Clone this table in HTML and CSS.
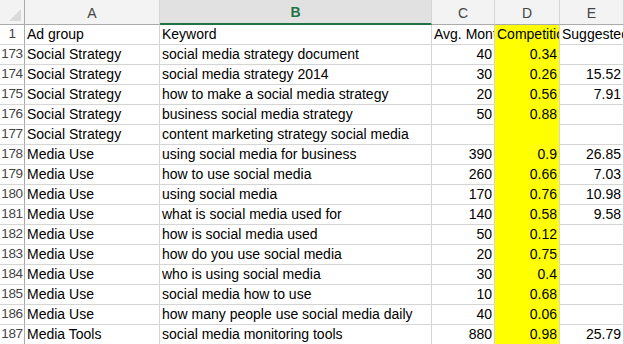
FILE: index.html
```html
<!DOCTYPE html>
<html>
<head>
<meta charset="utf-8">
<link rel="stylesheet" href="styles.css">
</head>
<body>
<div class="sheet">
  <div class="ch corner"><svg class="tri" width="14" height="14" viewBox="0 0 14 14"><polygon points="13,1 13,13 1,13" fill="#dadada"/></svg></div>
  <div class="ch">A</div>
  <div class="ch sel">B</div>
  <div class="ch">C</div>
  <div class="ch">D</div>
  <div class="ch">E</div>
  <div class="ch end"></div>

  <div class="rh">1</div><div class="c">Ad group</div><div class="c">Keyword</div><div class="c">Avg. Monthly Searches</div><div class="c y">Competition</div><div class="c">Suggested bid</div><div class="c end"></div>
  <div class="rh">173</div><div class="c">Social Strategy</div><div class="c">social media strategy document</div><div class="c n">40</div><div class="c n y">0.34</div><div class="c n"></div><div class="c end"></div>
  <div class="rh">174</div><div class="c">Social Strategy</div><div class="c">social media strategy 2014</div><div class="c n">30</div><div class="c n y">0.26</div><div class="c n">15.52</div><div class="c end"></div>
  <div class="rh">175</div><div class="c">Social Strategy</div><div class="c">how to make a social media strategy</div><div class="c n">20</div><div class="c n y">0.56</div><div class="c n">7.91</div><div class="c end"></div>
  <div class="rh">176</div><div class="c">Social Strategy</div><div class="c">business social media strategy</div><div class="c n">50</div><div class="c n y">0.88</div><div class="c n"></div><div class="c end"></div>
  <div class="rh">177</div><div class="c">Social Strategy</div><div class="c">content marketing strategy social media</div><div class="c n"></div><div class="c n y"></div><div class="c n"></div><div class="c end"></div>
  <div class="rh">178</div><div class="c">Media Use</div><div class="c">using social media for business</div><div class="c n">390</div><div class="c n y">0.9</div><div class="c n">26.85</div><div class="c end"></div>
  <div class="rh">179</div><div class="c">Media Use</div><div class="c">how to use social media</div><div class="c n">260</div><div class="c n y">0.66</div><div class="c n">7.03</div><div class="c end"></div>
  <div class="rh">180</div><div class="c">Media Use</div><div class="c">using social media</div><div class="c n">170</div><div class="c n y">0.76</div><div class="c n">10.98</div><div class="c end"></div>
  <div class="rh">181</div><div class="c">Media Use</div><div class="c">what is social media used for</div><div class="c n">140</div><div class="c n y">0.58</div><div class="c n">9.58</div><div class="c end"></div>
  <div class="rh">182</div><div class="c">Media Use</div><div class="c">how is social media used</div><div class="c n">50</div><div class="c n y">0.12</div><div class="c n"></div><div class="c end"></div>
  <div class="rh">183</div><div class="c">Media Use</div><div class="c">how do you use social media</div><div class="c n">20</div><div class="c n y">0.75</div><div class="c n"></div><div class="c end"></div>
  <div class="rh">184</div><div class="c">Media Use</div><div class="c">who is using social media</div><div class="c n">30</div><div class="c n y">0.4</div><div class="c n"></div><div class="c end"></div>
  <div class="rh">185</div><div class="c">Media Use</div><div class="c">social media how to use</div><div class="c n">10</div><div class="c n y">0.68</div><div class="c n"></div><div class="c end"></div>
  <div class="rh">186</div><div class="c">Media Use</div><div class="c">how many people use social media daily</div><div class="c n">40</div><div class="c n y">0.06</div><div class="c n"></div><div class="c end"></div>
  <div class="rh">187</div><div class="c">Media Tools</div><div class="c">social media monitoring tools</div><div class="c n">880</div><div class="c n y">0.98</div><div class="c n">25.79</div><div class="c end"></div>
</div>
</body>
</html>
```
FILE: styles.css
```css
html, body {
  margin: 0;
  padding: 0;
  background: #ffffff;
}
body {
  width: 624px;
  height: 344px;
  overflow: hidden;
}
.sheet {
  display: grid;
  grid-template-columns: 25px 135px 272px 63px 65px 64px 1fr;
  grid-template-rows: 25px;
  grid-auto-rows: 20px;
  font-family: "Liberation Sans", Arial, sans-serif;
  font-size: 14px;
  color: #000000;
}
.ch {
  background: #f3f3f3;
  border-right: 1px solid #d5d5d5;
  border-bottom: 1px solid #ababab;
  color: #444444;
  font-size: 14px;
  display: flex;
  align-items: center;
  justify-content: center;
  padding-top: 1px;
  box-sizing: border-box;
}
.ch.corner {
  border-right: 1px solid #ababab;
  justify-content: flex-end;
  align-items: flex-end;
  padding: 0 2px 2px 0;
}
.ch.sel {
  background: #e1e1e1;
  color: #217346;
  font-weight: bold;
  border-bottom: 2px solid #217346;
}
.ch.end {
  background: #ffffff;
  border-right: none;
}
.rh {
  background: #ffffff;
  border-right: 1px solid #ababab;
  border-bottom: 1px solid #d5d5d5;
  color: #444444;
  font-size: 13.5px;
  letter-spacing: -0.3px;
  display: flex;
  align-items: flex-end;
  justify-content: center;
  padding-bottom: 2px;
  box-sizing: border-box;
  line-height: 16px;
}
.c {
  border-right: 1px solid #d5d5d5;
  border-bottom: 1px solid #d5d5d5;
  white-space: nowrap;
  overflow: hidden;
  display: flex;
  align-items: flex-end;
  padding: 0 2px 2px 2px;
  box-sizing: border-box;
  line-height: 16px;
}
.c.n {
  justify-content: flex-end;
}
.c.y {
  background: #ffff00;
  border-bottom-color: #ffff00;
}
.c.end {
  border-right: none;
}
```
